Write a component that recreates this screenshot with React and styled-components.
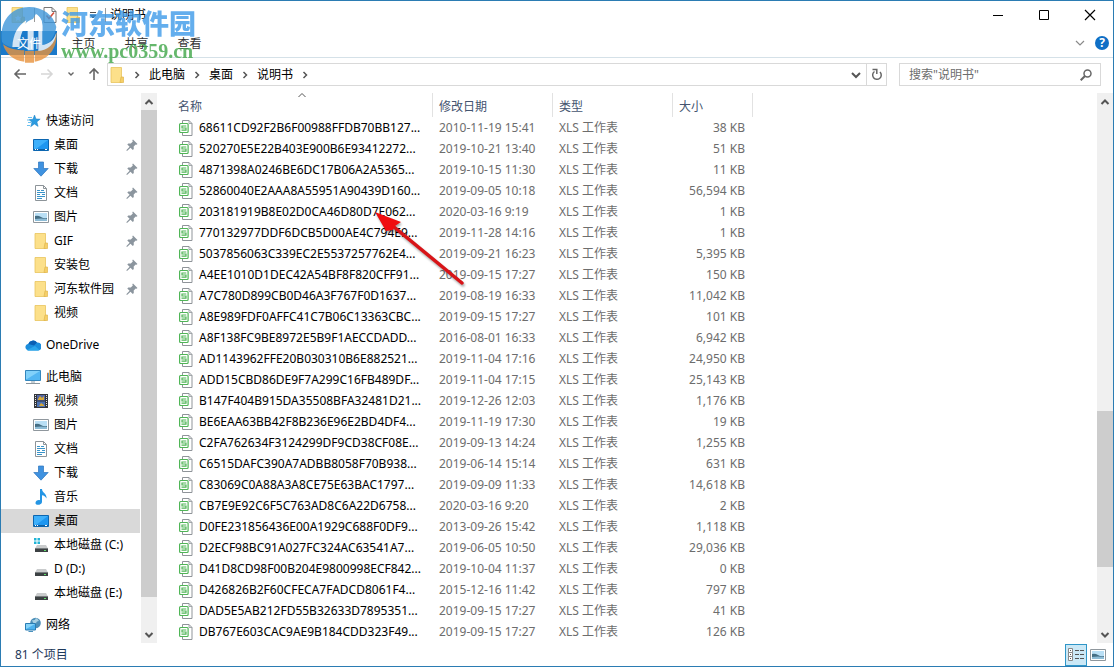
import React, { useState } from 'react';
import styled, { createGlobalStyle } from 'styled-components';

const files = [
    ['68611CD92F2B6F00988FFDB70BB127...', '2010-11-19 15:41', '38 KB'],
    ['520270E5E22B403E900B6E93412272...', '2019-10-21 13:40', '51 KB'],
    ['4871398A0246BE6DC17B06A2A5365...', '2019-10-15 11:30', '11 KB'],
    ['52860040E2AAA8A55951A90439D160...', '2019-09-05 10:18', '56,594 KB'],
    ['203181919B8E02D0CA46D80D7E062...', '2020-03-16 9:19', '1 KB'],
    ['770132977DDF6DCB5D00AE4C794E9...', '2019-11-28 14:16', '1 KB'],
    ['5037856063C339EC2E5537257762E4...', '2019-09-21 16:23', '5,395 KB'],
    ['A4EE1010D1DEC42A54BF8F820CFF91...', '2019-09-15 17:27', '150 KB'],
    ['A7C780D899CB0D46A3F767F0D1637...', '2019-08-19 16:33', '11,042 KB'],
    ['A8E989FDF0AFFC41C7B06C13363CBC...', '2019-09-15 17:27', '101 KB'],
    ['A8F138FC9BE8972E5B9F1AECCDADD...', '2016-08-01 16:33', '6,942 KB'],
    ['AD1143962FFE20B030310B6E882521...', '2019-11-04 17:16', '24,950 KB'],
    ['ADD15CBD86DE9F7A299C16FB489DF...', '2019-11-04 17:15', '25,143 KB'],
    ['B147F404B915DA35508BFA32481D21...', '2019-12-26 12:03', '1,176 KB'],
    ['BE6EAA63BB42F8B236E96E2BD4DF4...', '2019-11-19 17:30', '19 KB'],
    ['C2FA762634F3124299DF9CD38CF08E...', '2019-09-13 14:24', '1,255 KB'],
    ['C6515DAFC390A7ADBB8058F70B938...', '2019-06-14 15:14', '631 KB'],
    ['C83069C0A88A3A8CE75E63BAC1797...', '2019-09-09 11:33', '14,618 KB'],
    ['CB7E9E92C6F5C763AD8C6A22D6758...', '2020-03-16 9:20', '2 KB'],
    ['D0FE231856436E00A1929C688F0DF9...', '2013-09-26 15:42', '1,118 KB'],
    ['D2ECF98BC91A027FC324AC63541A7...', '2019-06-05 10:50', '29,036 KB'],
    ['D41D8CD98F00B204E9800998ECF842...', '2019-10-04 11:37', '0 KB'],
    ['D426826B2F60CFECA7FADCD8061F4...', '2015-12-16 11:42', '797 KB'],
    ['DAD5E5AB212FD55B32633D7895351...', '2019-09-15 17:27', '41 KB'],
    ['DB767E603CAC9AE9B184CDD323F49...', '2019-09-15 17:27', '126 KB'],
];

const navGroups = [
    {
        icon: 'star',
        label: '快速访问',
        items: [
            { icon: 'desktop', label: '桌面', pinned: true },
            { icon: 'download', label: '下载', pinned: true },
            { icon: 'document', label: '文档', pinned: true },
            { icon: 'picture', label: '图片', pinned: true },
            { icon: 'folder', label: 'GIF', pinned: true },
            { icon: 'folder', label: '安装包', pinned: true },
            { icon: 'folder', label: '河东软件园', pinned: true },
            { icon: 'folder', label: '视频' },
        ],
    },
    { icon: 'cloud', label: 'OneDrive', items: [] },
    {
        icon: 'computer',
        label: '此电脑',
        items: [
            { icon: 'video', label: '视频' },
            { icon: 'picture', label: '图片' },
            { icon: 'document', label: '文档' },
            { icon: 'download', label: '下载' },
            { icon: 'music', label: '音乐' },
            { icon: 'desktop', label: '桌面', selected: true },
            { icon: 'systemDisk', label: '本地磁盘 (C:)' },
            { icon: 'disk', label: 'D (D:)' },
            { icon: 'disk', label: '本地磁盘 (E:)' },
        ],
    },
    { icon: 'network', label: '网络', items: [] },
];

const disk = (
    <>
        <path d="M4 8h9l2 3.500H2z" fill="#c9cbcc" />
        <path d="M2 11h13v4H2z" fill="#3c4143" />
        <path d="M2 11h13v1H2z" fill="#777c7e" />
        <path d="M11 13h2v1h-2z" fill="#5fe06a" />
    </>
);

const folder = (
    <>
        <path d="M2 .5h10.500V15.500H2z" fill="#fce08a" stroke="#e9c45d" strokeWidth=".8" />
        <path d="M12 10h2.500v5.500H11z" fill="#f6cf68" stroke="#dfb64d" strokeWidth=".7" />
    </>
);

const icons = {
    star: (
        <>
            <path d="M9.500 2l1.500 4 4.200.1-3.300 2.800 1.200 4.500-3.700-2.400-3.700 2.700 1.200-4.500L4 6.600l3.900-.3z" fill="#2b9be0" stroke="#1c80c4" strokeWidth=".5" />
            <path d="M3 4.500h4M2 7h3M3 9.500h3M2 12.500h3" stroke="#6cc0ee" />
        </>
    ),
    desktop: (
        <>
            <path d="M.5 2.500h15v11H.5z" fill="#1e96f0" stroke="#0c66b0" />
            <path d="M1 3h14L3 12H1z" fill="#3eb0fb" />
            <path d="M1 12.500h14" stroke="#0f5fa2" />
            <path d="M2 12.500h1M4 12.500h1M12 12.500h2" stroke="#fff" />
        </>
    ),
    download: <path d="M5.500 1h5v6.500h4.700L8 15.200.8 7.500h4.700z" fill="#3f92e0" stroke="#2b74bd" strokeWidth=".7" />,
    document: (
        <>
            <path d="M2.500.5h8l3 3v12h-11z" fill="#fff" stroke="#8d9499" />
            <path d="M10.500.5v3h3" fill="none" stroke="#8d9499" />
            <path d="M4 5.500h3M4 7.500h8M4 9.500h3M9 9.500h3M4 11.500h8M4 13.500h5M8 5.500h3" stroke="#3a94c9" />
        </>
    ),
    picture: (
        <>
            <path d="M.5 2.500h15v11H.5z" fill="#fff" stroke="#8f979d" />
            <path d="M2 4h12v8H2z" fill="#b9dff5" />
            <path d="M2 7q3-1 6 1t6 1v3H2z" fill="#456f85" />
            <path d="M2 10q6-1 12 0v2H2z" fill="#8dbcd6" />
        </>
    ),
    folder,
    favorites: (
        <>
            {folder}
            <path d="M8 8l1 2 2.200.2-1.600 1.500.5 2.300L8 12.800 5.900 14l.5-2.300-1.600-1.500L7 10z" fill="#fff" />
        </>
    ),
    cloud: (
        <>
            <path d="M3 13.500a3.300 3.300 0 0 1 .3-6.500A5 5 0 0 1 12 5.500a4 4 0 0 1 1 8z" fill="#1b8ddc" />
            <path d="M3.300 7A5 5 0 0 1 12 5.500l-3 3z" fill="#0a5fb4" />
            <path d="M2 13l8-4 4.500 4q-1 .5-2 .5H3z" fill="#2ba7ec" />
        </>
    ),
    computer: (
        <>
            <path d="M.5 1.500h15v10H.5z" fill="#53b6f2" stroke="#3386bd" />
            <path d="M1 2h14L2 10H1z" fill="#82d1fa" />
            <path d="M6 12h4v2H6z" fill="#c5ced4" />
            <path d="M1 14.500h14" stroke="#8a969e" />
        </>
    ),
    video: (
        <>
            <path d="M1 1h14v14H1z" fill="#33363b" />
            <path d="M2.500 2v12M13.500 2v12" stroke="#e7e7e7" strokeDasharray="1 1" />
            <path d="M4 2h8v5.500H4z" fill="#5367a5" />
            <path d="M4 8.500h8V14H4z" fill="#4e73b4" />
            <path d="M5 6l2-3 2 2 2-2v4H5zM6 13l2-3 3 2v1z" fill="#d7a938" />
        </>
    ),
    music: <path d="M7 0h2c0 4 5 4 4.500 9.500-1-2-2.500-3-4.500-3.200V13c0 3-6 4-6.500 1.300C2.300 12 5 10.500 7 11.300z" fill="#2495e4" />,
    systemDisk: (
        <>
            {disk}
            <path d="M1 1h2.500v2.500H1zM4.500 1H7v2.500H4.500zM1 4.500h2.500V7H1zM4.500 4.500H7V7H4.500z" fill="#21b4d6" />
        </>
    ),
    disk,
    network: (
        <>
            <circle cx="10.500" cy="6" r="5.300" fill="#4d8fb8" />
            <path d="M7 3q3 1 4-2 2 1 3 3-3 0-3 3-3 0-4-4z" fill="#a9d0e2" />
            <path d="M.5 6.500h10v6.500H.5z" fill="#4cb2ee" stroke="#2a7db3" />
            <path d="M1 7h9l-9 5z" fill="#86d3f8" />
            <path d="M4 14h4v1H3z" fill="#4b92bd" />
        </>
    ),
};

const Icon = ({ name }) => (
    <svg width="16" height="16" viewBox="0 0 16 16" aria-hidden="true">{icons[name]}</svg>
);

const Chevron = ({ d = 'M1 3l4 4 4-4', color = '#555', weight = 1.5 }) => (
    <svg width="10" height="10" viewBox="0 0 10 10" aria-hidden="true">
        <path d={d} fill="none" stroke={color} strokeWidth={weight} />
    </svg>
);

const Pin = () => (
    <svg width="12" height="12" viewBox="0 0 12 12" aria-hidden="true">
        <path d="M7 .5L11.500 5l-1 .8-.8-.3-2 2 .1 2.500-1 1-2.300-2.300L1 12l-.7-.7 3.300-3.500L1.300 5.500l1-1 2.500.1 2-2L6.300 1.300z" fill="#8b959e" />
    </svg>
);

const SheetIcon = () => (
    <svg width="15" height="16" viewBox="0 0 15 16" aria-hidden="true">
        <path d="M4.500 3V.5h6.500l3 3v12h-9.500V13" fill="#fff" stroke="#8f9499" />
        <path d="M11 .5v3h3" fill="none" stroke="#8f9499" strokeWidth=".8" />
        <rect x="1.600" y="3.500" width="8.500" height="9" rx="1" fill="#fff" stroke="#4fb556" strokeWidth="1.200" />
        <path d="M8.300 6H4v2h4v2.200H3.500" fill="none" stroke="#4fb556" strokeWidth="1.200" />
    </svg>
);

const ScrollBar = ({ before, size, after, label }) => (
    <Track>
        <ScrollButton aria-label={`${label} up`}><Chevron d="M1.500 7L5 3.500 8.500 7" weight={2} /></ScrollButton>
        <Spacer $grow={before} />
        <Thumb $grow={size} />
        <Spacer $grow={after} />
        <ScrollButton aria-label={`${label} down`}><Chevron d="M1.500 3L5 6.500 8.500 3" weight={2} /></ScrollButton>
    </Track>
);

const App = () => {
    const [query, setQuery] = useState('');

    return (
        <Window>
            <GlobalStyle />
            <TitleBar>
                <QuickTools>
                    <Icon name="favorites" />
                    <Separator />
                    <ToolButton aria-label="属性">
                        <svg width="14" height="16" viewBox="0 0 14 16">
                            <path d="M1 .5h8l4 4v11H1z" fill="#fff" stroke="#777" />
                            <path d="M9 .5v4h4" fill="none" stroke="#777" />
                            <path d="M3.500 8.500l2.500 3L11 5.500" fill="none" stroke="#d5523c" strokeWidth="1.600" />
                        </svg>
                    </ToolButton>
                    <Icon name="folder" />
                    <ToolButton aria-label="自定义快速访问工具栏">
                        <svg width="8" height="8" viewBox="0 0 8 8">
                            <path d="M1 1.500h6M1 4h6L4 7z" fill="#222" stroke="#222" strokeWidth=".8" />
                        </svg>
                    </ToolButton>
                    <Separator />
                </QuickTools>
                <Title>说明书</Title>
                <WindowButton aria-label="最小化">
                    <svg width="12" height="12"><path d="M1 6.500h10" stroke="#000" /></svg>
                </WindowButton>
                <WindowButton aria-label="最大化">
                    <svg width="12" height="12"><path d="M1.500 1.500h9v9h-9z" fill="none" stroke="#000" /></svg>
                </WindowButton>
                <WindowButton aria-label="关闭">
                    <svg width="12" height="12"><path d="M1 1l10 10M11 1L1 11" stroke="#000" strokeWidth="1.200" /></svg>
                </WindowButton>
            </TitleBar>

            <Ribbon>
                <FileTab>文件</FileTab>
                <RibbonTab>主页</RibbonTab>
                <RibbonTab>共享</RibbonTab>
                <RibbonTab>查看</RibbonTab>
                <RibbonEnd>
                    <ToolButton aria-label="展开功能区"><Chevron color="#8a8a8a" weight={1.2} /></ToolButton>
                    <HelpButton aria-label="帮助">?</HelpButton>
                </RibbonEnd>
            </Ribbon>

            <NavBar>
                <HistoryButtons>
                    <ToolButton aria-label="后退">
                        <svg width="14" height="12"><path d="M13 6H2M6.500 1.500L2 6l4.500 4.500" fill="none" stroke="#666" strokeWidth="1.600" /></svg>
                    </ToolButton>
                    <ToolButton aria-label="前进">
                        <svg width="14" height="12"><path d="M1 6h11M7.500 1.500L12 6l-4.500 4.500" fill="none" stroke="#d6d6d6" strokeWidth="1.600" /></svg>
                    </ToolButton>
                    <ToolButton aria-label="最近位置">
                        <svg width="8" height="8"><path d="M1.500 2.500L4 5l2.500-2.500" fill="none" stroke="#666" strokeWidth="1.400" /></svg>
                    </ToolButton>
                    <ToolButton aria-label="上移">
                        <svg width="12" height="14"><path d="M6 13V2M1.500 6.500L6 2l4.500 4.500" fill="none" stroke="#666" strokeWidth="1.600" /></svg>
                    </ToolButton>
                </HistoryButtons>
                <AddressBar>
                    <Icon name="folder" />
                    <CrumbArrow><Chevron d="M3.500 2L6.500 5l-3 3" /></CrumbArrow>
                    <Crumb>此电脑</Crumb>
                    <CrumbArrow><Chevron d="M3.500 2L6.500 5l-3 3" /></CrumbArrow>
                    <Crumb>桌面</Crumb>
                    <CrumbArrow><Chevron d="M3.500 2L6.500 5l-3 3" /></CrumbArrow>
                    <Crumb>说明书</Crumb>
                    <CrumbArrow><Chevron d="M3.500 2L6.500 5l-3 3" /></CrumbArrow>
                    <AddressEnd>
                        <AddressButton aria-label="以前的位置"><Chevron weight={2} /></AddressButton>
                        <AddressButton $divided aria-label="刷新">
                            <svg width="12" height="13">
                                <path d="M3.500 3.500a4.300 4.300 0 1 0 5.500.5" fill="none" stroke="#666" strokeWidth="1.500" />
                                <path d="M1.500 1.500h4.300V6" fill="none" stroke="#666" strokeWidth="1.500" />
                            </svg>
                        </AddressButton>
                    </AddressEnd>
                </AddressBar>
                <SearchBox>
                    <SearchInput
                        aria-label="搜索"
                        value={query}
                        onChange={(e) => setQuery(e.target.value)}
                        placeholder={'搜索"说明书"'}
                    />
                    <svg width="12" height="12" aria-hidden="true">
                        <circle cx="7.500" cy="4.500" r="3.500" fill="none" stroke="#666" strokeWidth="1.500" />
                        <path d="M5 7l-4.300 4.300" stroke="#666" strokeWidth="2" />
                    </svg>
                </SearchBox>
            </NavBar>

            <Body>
                <Sidebar>
                    {navGroups.map((group) => (
                        <NavGroup key={group.label}>
                            <NavRow href="#"><Icon name={group.icon} />{group.label}</NavRow>
                            {group.items.map((item) => (
                                <NavRow key={item.label} href="#" $child $selected={item.selected}>
                                    <Icon name={item.icon} />
                                    <NavLabel>{item.label}</NavLabel>
                                    {item.pinned && <Pin />}
                                </NavRow>
                            ))}
                        </NavGroup>
                    ))}
                </Sidebar>
                <ScrollBar label="导航" before={0} size={487} after={29} />

                <FileArea>
                    <FileTable>
                        <colgroup>
                            <Col $width={261} />
                            <Col $width={120} />
                            <Col $width={120} />
                            <Col $width={80} />
                        </colgroup>
                        <thead>
                            <tr>
                                <HeadCell>
                                    名称
                                    <SortMark><Chevron d="M1.500 6L5 2.500 8.500 6" weight={1} /></SortMark>
                                </HeadCell>
                                <HeadCell>修改日期</HeadCell>
                                <HeadCell>类型</HeadCell>
                                <HeadCell>大小</HeadCell>
                            </tr>
                        </thead>
                        <tbody>
                            {files.map(([name, date, size]) => (
                                <tr key={name}>
                                    <Cell><FileName><SheetIcon />{name}</FileName></Cell>
                                    <Cell $muted>{date}</Cell>
                                    <Cell $muted>XLS 工作表</Cell>
                                    <Cell $muted $right>{size}</Cell>
                                </tr>
                            ))}
                        </tbody>
                    </FileTable>
                </FileArea>
                <ScrollBar label="文件" before={301} size={156} after={59} />
            </Body>

            <StatusBar>
                <span>81 个项目</span>
                <ViewButtons>
                    <ViewButton $active aria-label="详细信息">
                        <svg width="16" height="14">
                            <path d="M.5.5h4v4h-4zM.5 4.500h4v4h-4zM.5 8.500h4v4h-4z" fill="#fff" stroke="#888" />
                            <path d="M2 2.500h1M2 6.500h1M2 10.500h1M7 2.500h4M12 2.500h4M7 6.500h4M12 6.500h4M7 10.500h4M12 10.500h4" stroke="#555" />
                        </svg>
                    </ViewButton>
                    <ViewButton aria-label="大图标"><Icon name="picture" /></ViewButton>
                </ViewButtons>
            </StatusBar>

            <SiteMark>
                <svg width="56" height="58" viewBox="0 0 168 174" aria-hidden="true">
                    <path d="M3 110C-6 50 30 6 84 6c42 0 74 24 82 60-6 36-22 50-42 54V62c0-16-8-26-20-34L96 42C72 50 48 74 40 128c-20-4-32-10-37-18z" fill="#3f97da" />
                    <path d="M6 118c18 14 42 18 64 18v34C38 168 14 146 6 118zM72 138h27v35H72zM101 138c34-2 54-20 66-56 2 48-24 82-66 88z" fill="#e8923c" />
                    <path d="M34 126c2-38 16-64 42-80l-6 24c-10 14-14 34-14 56zM74 62l24-16v90H80V76zM104 26c14 8 20 20 20 36v58c22-4 34-14 42-36-4 34-26 52-54 54V58c0-12-2-22-8-32z" fill="#fff" />
                </svg>
                <SiteText>
                    <SiteName>河东软件园</SiteName>
                    <SiteUrl>www.pc0359.cn</SiteUrl>
                </SiteText>
            </SiteMark>

            <Pointer width="100" height="84" viewBox="0 0 100 84" aria-hidden="true">
                <path d="M23 19L91 75" stroke="#d81418" strokeWidth="3.500" strokeLinecap="round" />
                <path d="M4 4l26 10-6 4-2 4-7 1z" fill="#f00d10" />
            </Pointer>
        </Window>
    );
};

export default App;

// Styled Components
const GlobalStyle = createGlobalStyle`
    * {
        box-sizing: border-box;
    }

    body {
        margin: 0;
        background: #fff;
    }

    body, button, input {
        font-family: 'Noto Sans', 'Noto Sans CJK SC', sans-serif;
        font-size: 12px;
    }

    button {
        padding: 0;
        border: none;
        background: none;
        color: inherit;
    }

    svg {
        display: block;
        flex: none;
    }
`;

const Window = styled.div`
    position: relative;
    display: flex;
    flex-direction: column;
    height: 100vh;
    overflow: hidden;
    border: 1px solid #2b7cb3;
    color: #000;
    line-height: 16px;
`;

const TitleBar = styled.header`
    display: flex;
    align-items: center;
    height: 30px;
    padding: 0 0 2px 9px;
`;

const QuickTools = styled.div`
    display: flex;
    align-items: center;
    gap: 8px;
    margin-right: 4px;
`;

const Separator = styled.span`
    width: 1px;
    height: 14px;
    background: #999;
`;

const ToolButton = styled.button`
    display: grid;
    place-items: center;
`;

const Title = styled.span`
    flex: 1;
`;

const WindowButton = styled.button`
    display: grid;
    place-items: center;
    width: 46px;
    height: 28px;
`;

const Ribbon = styled.nav`
    display: flex;
    align-items: center;
    height: 27px;
    padding-bottom: 2px;
    border-bottom: 1px solid #d5e1e8;
`;

const RibbonTab = styled.button`
    width: 53px;
    height: 24px;
    color: #333;
`;

const FileTab = styled(RibbonTab)`
    width: 56px;
    background: #1979ca;
    color: #fff;
`;

const RibbonEnd = styled.div`
    display: flex;
    align-items: center;
    gap: 10px;
    margin-left: auto;
    padding-right: 4px;
`;

const HelpButton = styled.button`
    width: 14px;
    height: 14px;
    border-radius: 50%;
    background: #0f6fc6;
    color: #fff;
    font-weight: 700;
    line-height: 14px;
`;

const NavBar = styled.div`
    display: flex;
    gap: 12px;
    height: 34px;
    padding: 5px 12px 6px 12px;
`;

const HistoryButtons = styled.div`
    display: flex;
    align-items: center;
    gap: 13px;
    padding-bottom: 1px;
`;

const AddressBar = styled.div`
    display: flex;
    flex: 1;
    align-items: center;
    margin-left: -5px;
    padding-left: 1px;
    border: 1px solid #d9d9d9;
`;

const Crumb = styled.button`
    height: 100%;
    padding-bottom: 2px;
`;

const CrumbArrow = styled.span`
    display: grid;
    place-items: center;
    width: 24px;
`;

const AddressEnd = styled.div`
    display: flex;
    align-self: stretch;
    margin-left: auto;
`;

const AddressButton = styled.button`
    display: grid;
    place-items: center;
    width: 20px;
    border-left: ${({ $divided }) => ($divided ? '1px solid #d9d9d9' : 'none')};
`;

const SearchBox = styled.label`
    display: flex;
    align-items: center;
    width: 202px;
    padding: 0 8px;
    border: 1px solid #d9d9d9;
`;

const SearchInput = styled.input`
    flex: 1;
    min-width: 0;
    padding: 0 0 0 1px;
    border: none;
    outline: none;

    &::placeholder {
        color: #6d6d6d;
        opacity: 1;
    }
`;

const Body = styled.main`
    display: flex;
    flex: 1;
    min-height: 0;
    padding-top: 1px;
`;

const Sidebar = styled.nav`
    display: flex;
    flex-direction: column;
    gap: 8px;
    width: 140px;
    padding-top: 16px;
    overflow: hidden;
`;

const NavGroup = styled.div`
    display: flex;
    flex-direction: column;
    flex: none;
`;

const NavRow = styled.a`
    display: flex;
    align-items: center;
    gap: 5px;
    height: 24px;
    margin-right: 1px;
    padding: 0 2px 0 ${({ $child }) => ($child ? '32px' : '24px')};
    background: ${({ $selected }) => ($selected ? '#d9d9d9' : 'none')};
    color: #000;
    text-decoration: none;
    white-space: nowrap;
`;

const NavLabel = styled.span`
    flex: 1;
`;

const Track = styled.div`
    display: flex;
    flex-direction: column;
    flex: none;
    width: 16px;
    background: #f0f0f0;
`;

const ScrollButton = styled.button`
    display: grid;
    place-items: center;
    height: 17px;
`;

const Spacer = styled.div`
    flex: ${({ $grow }) => $grow} 0 0;
`;

const Thumb = styled.div`
    flex: ${({ $grow }) => $grow} 0 0;
    background: #cdcdcd;
`;

const FileArea = styled.section`
    flex: 1;
    min-width: 0;
    padding-left: 15px;
    overflow: hidden;
`;

const FileTable = styled.table`
    width: 581px;
    table-layout: fixed;
    border-spacing: 0;
`;

const Col = styled.col`
    width: ${({ $width }) => $width}px;
`;

const HeadCell = styled.th`
    position: relative;
    height: 24px;
    padding: 3px 6px 0;
    border-right: 1px solid #e2e2e2;
    color: #44546f;
    font-weight: 400;
    text-align: left;
`;

const SortMark = styled.span`
    position: absolute;
    top: -2px;
    left: 50%;
    margin-left: -5px;
`;

const Cell = styled.td`
    height: 21px;
    padding: 0 ${({ $right }) => ($right ? '8px' : '0')} 0 6px;
    color: ${({ $muted }) => ($muted ? '#6d6d6d' : '#000')};
    text-align: ${({ $right }) => ($right ? 'right' : 'left')};
    white-space: nowrap;
`;

const FileName = styled.div`
    display: flex;
    align-items: center;
    gap: 6px;
`;

const StatusBar = styled.footer`
    display: flex;
    align-items: center;
    justify-content: space-between;
    height: 23px;
    padding: 0 4px 0 14px;
    color: #1e395b;
`;

const ViewButtons = styled.div`
    display: flex;
`;

const ViewButton = styled.button`
    display: grid;
    place-items: center;
    width: 22px;
    height: 22px;
    border: 1px solid ${({ $active }) => ($active ? '#2f96c8' : 'transparent')};
    background: ${({ $active }) => ($active ? '#cbe8f6' : 'none')};
`;

const SiteMark = styled.div`
    position: absolute;
    top: 4px;
    left: 0;
    display: flex;
    gap: 4px;
    opacity: 0.8;
    pointer-events: none;
`;

const SiteText = styled.div`
    display: flex;
    flex-direction: column;
    padding-top: 3px;
`;

const SiteName = styled.span`
    color: #3e9be9;
    font-size: 27px;
    font-weight: 900;
    line-height: 32px;
`;

const SiteUrl = styled.span`
    color: #3fa648;
    font-family: 'Liberation Serif', serif;
    font-size: 20px;
    font-weight: 700;
    line-height: 22px;
`;

const Pointer = styled.svg`
    position: absolute;
    top: 207px;
    left: 370px;
    pointer-events: none;
    filter: drop-shadow(1px 2px 1px rgba(0, 0, 0, 0.35));
`;
